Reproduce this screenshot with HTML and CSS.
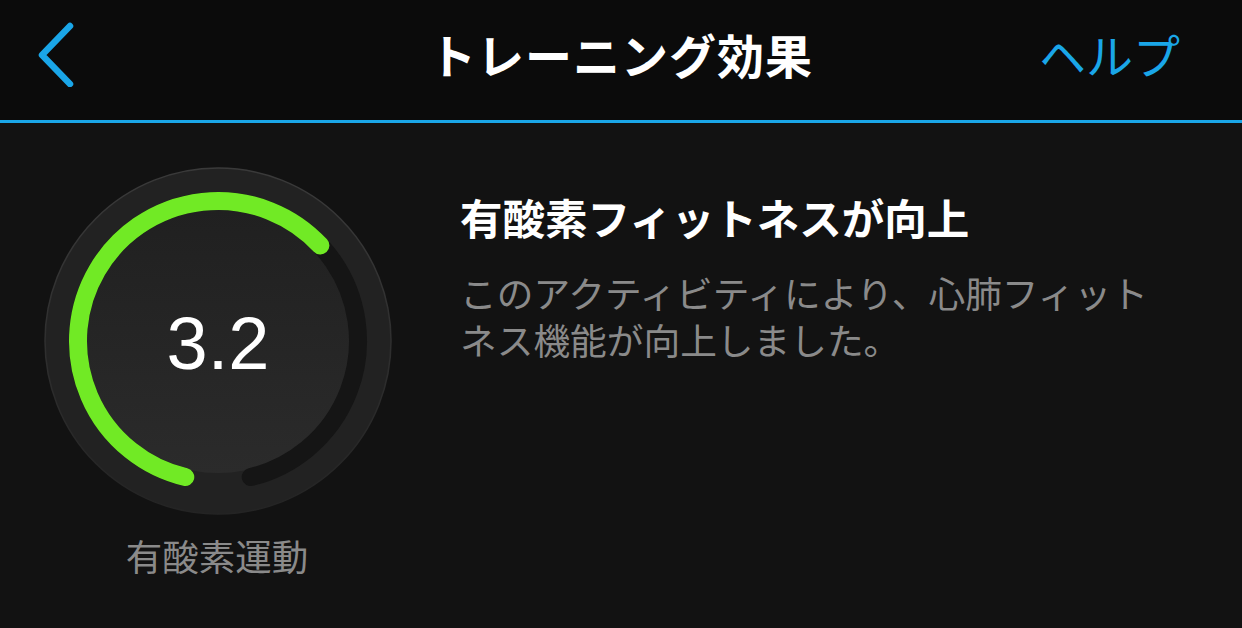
FILE: index.html
```html
<!DOCTYPE html>
<html lang="ja">
<head>
<meta charset="utf-8">
<title>トレーニング効果</title>
<link rel="stylesheet" href="styles.css">
</head>
<body>
<header class="topbar">
  <div class="nav-left">
    <svg class="back" width="40" height="66" viewBox="0 0 40 66">
      <polyline points="33,5 5,34 33,63" fill="none" stroke="#1aa6e8" stroke-width="6.5" stroke-linecap="round" stroke-linejoin="round"/>
    </svg>
  </div>
  <h1 class="title">トレーニング効果</h1>
  <div class="nav-right"><span class="help">ヘルプ</span></div>
</header>
<main class="content">
  <section class="gauge-col">
    <div class="gauge">
      <svg width="348" height="348" viewBox="0 0 348 348">
        <defs>
          <linearGradient id="disc" x1="0" y1="0" x2="0" y2="1">
            <stop offset="0" stop-color="#202020"/>
            <stop offset="1" stop-color="#2b2b2b"/>
          </linearGradient>
          <linearGradient id="rim" x1="0" y1="0" x2="0" y2="1">
            <stop offset="0" stop-color="#3a3a3a"/>
            <stop offset="1" stop-color="#242424"/>
          </linearGradient>
        </defs>
        <circle cx="174" cy="174" r="173" fill="#222222" stroke="url(#rim)" stroke-width="1.5"/>
        <circle cx="174" cy="174" r="132" fill="url(#disc)"/>
        <path d="M 141.3 310.1 A 140 140 0 1 1 206.7 310.1" fill="none" stroke="#151515" stroke-width="18" stroke-linecap="round"/>
        <path d="M 141.3 310.1 A 140 140 0 1 1 276.4 78.5" fill="none" stroke="#71ea25" stroke-width="18" stroke-linecap="round"/>
      </svg>
      <div class="value">3.2</div>
    </div>
    <div class="gauge-label">有酸素運動</div>
  </section>
  <section class="text-col">
    <h2 class="heading">有酸素フィットネスが向上</h2>
    <p class="desc">このアクティビティにより、心肺フィットネス機能が向上しました。</p>
  </section>
</main>
</body>
</html>
```
FILE: styles.css
```css
html, body {
  margin: 0;
  padding: 0;
}
body {
  background: #121212;
  width: 1242px;
  height: 628px;
  overflow: hidden;
  font-family: "Noto Sans CJK JP", "Noto Sans", sans-serif;
  color: #ffffff;
}
.topbar {
  box-sizing: border-box;
  background: #0b0b0b;
  border-bottom: 3px solid #1aa6e8;
  height: 123px;
  display: grid;
  grid-template-columns: 1fr auto 1fr;
  align-items: center;
  padding-bottom: 14px;
}
.nav-left {
  padding-left: 37px;
  display: flex;
  align-items: center;
}
.back {
  display: block;
  margin-top: 2px;
}
.title {
  margin: 0;
  font-size: 47px;
  font-weight: 700;
  line-height: 1;
  letter-spacing: 1px;
}
.nav-right {
  display: flex;
  justify-content: flex-end;
  padding-right: 62px;
}
.help {
  color: #1aa6e8;
  font-size: 47px;
  font-weight: 400;
  line-height: 1;
}
.content {
  display: flex;
  padding: 44px 0 0 44px;
  gap: 68px;
}
.gauge-col {
  width: 348px;
  display: flex;
  flex-direction: column;
  align-items: center;
}
.gauge {
  position: relative;
  width: 348px;
  height: 348px;
}
.gauge svg {
  display: block;
}
.value {
  position: absolute;
  inset: 0;
  display: flex;
  align-items: center;
  justify-content: center;
  font-family: "Liberation Sans", Arial, sans-serif;
  font-size: 74px;
  color: #ffffff;
  padding-top: 4px;
}
.gauge-label {
  margin-top: 20px;
  font-size: 36.5px;
  line-height: 1.15;
  color: #8a8a8a;
  margin-left: -2px;
}
.text-col {
  width: 710px;
  padding-top: 21px;
}
.heading {
  margin: 0;
  font-size: 42.5px;
  font-weight: 700;
  line-height: 58px;
  color: #ffffff;
}
.desc {
  margin: 23px 0 0 0;
  font-size: 36.7px;
  line-height: 47px;
  color: #8a8a8a;
  font-weight: 400;
}
```
